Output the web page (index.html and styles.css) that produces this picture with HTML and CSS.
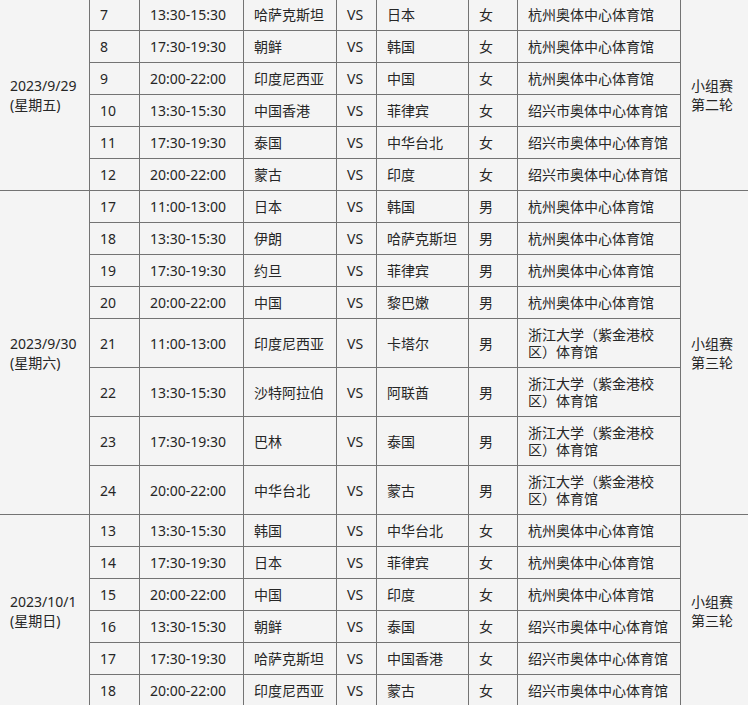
FILE: index.html
```html
<!DOCTYPE html>
<html lang="zh-CN">
<head>
<meta charset="utf-8">
<title>赛程表</title>
<link rel="stylesheet" href="styles.css">
</head>
<body>
<table class="schedule">
  <colgroup>
    <col class="c-date"><col class="c-no"><col class="c-time"><col class="c-team"><col class="c-vs"><col class="c-team2"><col class="c-sex"><col class="c-venue"><col class="c-round">
  </colgroup>
  <tbody>
    <tr><td class="multi" rowspan="6">2023/9/29<br>(星期五)</td><td>7</td><td>13:30-15:30</td><td>哈萨克斯坦</td><td>VS</td><td>日本</td><td>女</td><td class="venue">杭州奥体中心体育馆</td><td class="multi" rowspan="6">小组赛<br>第二轮</td></tr>
    <tr><td>8</td><td>17:30-19:30</td><td>朝鲜</td><td>VS</td><td>韩国</td><td>女</td><td class="venue">杭州奥体中心体育馆</td></tr>
    <tr><td>9</td><td>20:00-22:00</td><td>印度尼西亚</td><td>VS</td><td>中国</td><td>女</td><td class="venue">杭州奥体中心体育馆</td></tr>
    <tr><td>10</td><td>13:30-15:30</td><td>中国香港</td><td>VS</td><td>菲律宾</td><td>女</td><td class="venue">绍兴市奥体中心体育馆</td></tr>
    <tr><td>11</td><td>17:30-19:30</td><td>泰国</td><td>VS</td><td>中华台北</td><td>女</td><td class="venue">绍兴市奥体中心体育馆</td></tr>
    <tr><td>12</td><td>20:00-22:00</td><td>蒙古</td><td>VS</td><td>印度</td><td>女</td><td class="venue">绍兴市奥体中心体育馆</td></tr>

    <tr><td class="multi" rowspan="8">2023/9/30<br>(星期六)</td><td>17</td><td>11:00-13:00</td><td>日本</td><td>VS</td><td>韩国</td><td>男</td><td class="venue">杭州奥体中心体育馆</td><td class="multi" rowspan="8">小组赛<br>第三轮</td></tr>
    <tr><td>18</td><td>13:30-15:30</td><td>伊朗</td><td>VS</td><td>哈萨克斯坦</td><td>男</td><td class="venue">杭州奥体中心体育馆</td></tr>
    <tr><td>19</td><td>17:30-19:30</td><td>约旦</td><td>VS</td><td>菲律宾</td><td>男</td><td class="venue">杭州奥体中心体育馆</td></tr>
    <tr><td>20</td><td>20:00-22:00</td><td>中国</td><td>VS</td><td>黎巴嫩</td><td>男</td><td class="venue">杭州奥体中心体育馆</td></tr>
    <tr><td>21</td><td>11:00-13:00</td><td>印度尼西亚</td><td>VS</td><td>卡塔尔</td><td>男</td><td class="venue">浙江大学（紫金港校区）体育馆</td></tr>
    <tr><td>22</td><td>13:30-15:30</td><td>沙特阿拉伯</td><td>VS</td><td>阿联酋</td><td>男</td><td class="venue">浙江大学（紫金港校区）体育馆</td></tr>
    <tr><td>23</td><td>17:30-19:30</td><td>巴林</td><td>VS</td><td>泰国</td><td>男</td><td class="venue">浙江大学（紫金港校区）体育馆</td></tr>
    <tr><td>24</td><td>20:00-22:00</td><td>中华台北</td><td>VS</td><td>蒙古</td><td>男</td><td class="venue">浙江大学（紫金港校区）体育馆</td></tr>

    <tr><td class="multi" rowspan="6">2023/10/1<br>(星期日)</td><td>13</td><td>13:30-15:30</td><td>韩国</td><td>VS</td><td>中华台北</td><td>女</td><td class="venue">杭州奥体中心体育馆</td><td class="multi" rowspan="6">小组赛<br>第三轮</td></tr>
    <tr><td>14</td><td>17:30-19:30</td><td>日本</td><td>VS</td><td>菲律宾</td><td>女</td><td class="venue">杭州奥体中心体育馆</td></tr>
    <tr><td>15</td><td>20:00-22:00</td><td>中国</td><td>VS</td><td>印度</td><td>女</td><td class="venue">杭州奥体中心体育馆</td></tr>
    <tr><td>16</td><td>13:30-15:30</td><td>朝鲜</td><td>VS</td><td>泰国</td><td>女</td><td class="venue">绍兴市奥体中心体育馆</td></tr>
    <tr><td>17</td><td>17:30-19:30</td><td>哈萨克斯坦</td><td>VS</td><td>中国香港</td><td>女</td><td class="venue">绍兴市奥体中心体育馆</td></tr>
    <tr><td>18</td><td>20:00-22:00</td><td>印度尼西亚</td><td>VS</td><td>蒙古</td><td>女</td><td class="venue">绍兴市奥体中心体育馆</td></tr>
  </tbody>
</table>
</body>
</html>
```

FILE: styles.css
```css
html, body {
  margin: 0;
  padding: 0;
  background: #f4f4f4;
  overflow: hidden;
}

body {
  font-family: "Noto Sans", "Noto Sans CJK SC", sans-serif;
  font-size: 14px;
  color: #262626;
}

.schedule {
  border-collapse: collapse;
  table-layout: fixed;
  width: 761px;
  margin: -2px 0 0 -1px;
  background: #f4f4f4;
}

.c-date { width: 90px; }
.c-no { width: 50px; }
.c-time { width: 104px; }
.c-team { width: 93px; }
.c-vs { width: 40px; }
.c-team2 { width: 92px; }
.c-sex { width: 49px; }
.c-venue { width: 163px; }
.c-round { width: 80px; }

.schedule td {
  border: 1px solid #737373;
  padding: 7px 4px 7px 10px;
  line-height: 17px;
  text-align: left;
  vertical-align: middle;
  text-spacing-trim: space-all;
}

.schedule td.venue {
  padding-right: 10px;
}

.schedule td.multi {
  line-height: 19px;
}
```
